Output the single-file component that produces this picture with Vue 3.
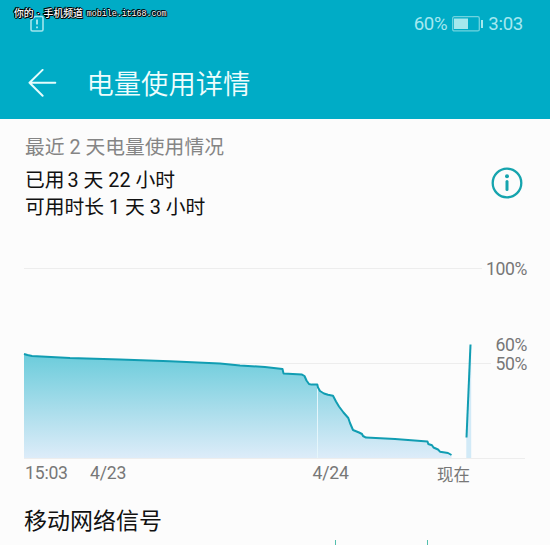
<script setup>
const levels = '24,354 27.5,355 32,356 70,358 120,359.5 170,361.3 220,363.4 240,365.4 265,367 282.5,369 283.5,373.4 302,374.6 304.5,376 306.5,380.5 309,384 311.5,384.6 317.3,384.6 318,387.5 320,391 324,393.5 328,394.8 333,395.7 336,401.5 339,406.5 343.5,412.5 348.3,418 350,423 353,430 359,432.5 362,434 363,436 366,437.6 395,439 427.5,441.5 428.3,444 432,445.3 433.5,447.5 438,449.5 440,451.7 448,453 451.5,455'
const area = `24,458 ${levels} 451.5,458`
const scale = [
  { y: 275, text: '100%' },
  { y: 351, text: '60%' },
  { y: 370, text: '50%' }
]
const dates = [
  { x: 25, text: '15:03' },
  { x: 90, text: '4/23' },
  { x: 312.5, text: '4/24' }
]
</script>

<template>
  <main class="screen">
    <header>
      <div class="status">
        <svg class="sim" width="14" height="18" viewBox="0 0 14 18">
          <path d="M5 1.5H11.5Q13 1.5 13 3V14.5Q13 16 11.5 16H2.5Q1 16 1 14.5V5.5Z" />
          <path class="mark" d="M7 4.5V9.5M7 11.5V13.3" />
        </svg>
        <span class="percent">60%</span>
        <svg class="battery" width="31" height="16" viewBox="0 0 31 16">
          <rect x=".7" y=".7" width="26.6" height="14.2" rx="1.5" />
          <path class="fill" d="M2 2.5H16V13H2ZM29 4H31V12H29Z" />
        </svg>
        <span class="clock">3:03</span>
      </div>
      <div class="bar">
        <svg width="29" height="29" viewBox="0 0 29 29">
          <path d="M27.3 13.7H1.5M14.6 .9L1.5 13.7L14.6 26.8" />
        </svg>
        <h1>电量使用详情</h1>
      </div>
      <div class="watermark"><span>你的<i>·</i>手机频道</span><b>mobile.it168.com</b></div>
    </header>

    <section class="summary">
      <div>
        <p class="caption">最近 2 天电量使用情况</p>
        <p class="used">已用<span class="num">3</span> 天 22 小时</p>
        <p class="left">可用时长 1 天 3 小时</p>
      </div>
      <svg class="info" width="32" height="32" viewBox="0 0 32 32">
        <circle cx="16" cy="16" r="14.3" />
        <path d="M16 14.5V22.5" />
        <circle class="dot" cx="16" cy="9.2" r="2" />
      </svg>
    </section>

    <svg class="chart" width="550" height="263" viewBox="0 230 550 263">
      <defs>
        <linearGradient id="charge" gradientUnits="userSpaceOnUse" x1="0" y1="354" x2="0" y2="458">
          <stop offset="0" stop-color="#6bccdb" />
          <stop offset=".5" stop-color="#a5dcea" />
          <stop offset="1" stop-color="#ddecf9" />
        </linearGradient>
      </defs>
      <path class="grid" d="M24 268.5H482M24 363.5H491M24 458.5H525" />
      <polygon :points="area" fill="url(#charge)" />
      <path class="recharge" d="M466.3 458V437L470 345H471.2V458Z" />
      <path class="gap" d="M317.5 388V458" />
      <polyline class="line" :points="levels" />
      <path class="line" d="M466.5 437.5L470.5 344.5" />
      <text v-for="s in scale" :key="s.text" x="527" :y="s.y" text-anchor="end">{{ s.text }}</text>
      <text v-for="d in dates" :key="d.text" class="date" :x="d.x" y="479">{{ d.text }}</text>
      <text class="now" x="437" y="480.5">现在</text>
    </svg>

    <section class="signal">
      <h2>移动网络信号</h2>
      <svg width="550" height="6" viewBox="0 0 550 6">
        <path d="M335.5 0V6M427.5 0V6" />
      </svg>
    </section>
  </main>
</template>

<style>
body { margin: 0; overflow: hidden; }
</style>

<style scoped>
.screen {
  width: 550px;
  height: 545px;
  overflow: hidden;
  background: #fcfcfc;
  font-family: Roboto, "Noto Sans CJK SC", sans-serif;
  color: #111;
}
svg { display: block; flex: none; }
h1, h2, p { margin: 0; font-weight: 400; white-space: nowrap; }
header {
  position: relative;
  height: 119px;
  background: #00acc6;
}
.status {
  display: flex;
  align-items: center;
  height: 47px;
  padding-left: 30px;
  color: #a5e8f0;
  font-size: 18.6px;
  letter-spacing: -.3px;
}
.sim { fill: none; stroke: #a0e5ed; stroke-width: 1.6; }
.sim .mark { stroke-width: 2; }
.percent { margin-left: auto; }
.battery { margin: 0 5px; fill: none; stroke: #70d3df; stroke-width: 1.3; }
.battery .fill { fill: #a5e8ed; stroke: none; }
.clock { margin-right: 27px; }
.bar { display: flex; align-items: center; height: 72px; padding-left: 28px; gap: 29.5px; }
.bar svg { fill: none; stroke: #e4fcfc; stroke-width: 2; stroke-linecap: round; stroke-linejoin: round; }
h1 { padding-top: 3px; color: #effdfd; font-size: 27.3px; line-height: 40px; font-weight: 350; }
.watermark {
  position: absolute;
  left: 14px;
  top: 6px;
  display: flex;
  align-items: center;
  gap: 4px;
  height: 14px;
  color: #fff;
  white-space: nowrap;
  font-size: 9.8px;
  font-weight: 500;
  text-shadow: 1px 0 #000, -1px 0 #000, 0 1px #000, 0 -1px #000, 1px 1px #000, -1px -1px #000;
}
.watermark i { display: inline-block; width: 10px; text-align: center; font-style: normal; font-weight: 700; }
.watermark b { padding-top: 1px; font: 8.3px "Liberation Mono", monospace; }
.summary {
  display: flex;
  justify-content: space-between;
  height: 111px;
  padding: 0 27px 0 25px;
  box-sizing: border-box;
  font-size: 19.8px;
  line-height: 27px;
}
.caption { margin-top: 15px; color: #858585; }
.used { margin-top: 6px; }
.num { margin-left: 3px; }
.info { margin-top: 48px; fill: none; stroke: #16a4ae; stroke-width: 2.3; }
.info path { stroke-width: 3; stroke-linecap: round; }
.info .dot { fill: #16a4ae; stroke: none; }
.chart text { fill: #777; font-size: 17.6px; letter-spacing: -.4px; }
.chart .date { letter-spacing: -.2px; }
.chart .now { font-size: 16.5px; letter-spacing: 0; }
.grid { stroke: #ededed; stroke-width: 1; fill: none; }
.gap { stroke: #e5f6fb; stroke-width: 1; }
.recharge { fill: #d2eaf7; }
.line { fill: none; stroke: #119db2; stroke-width: 2; stroke-linejoin: round; }
h2 { padding: 12px 0 0 24px; font-size: 23px; line-height: 34px; }
.signal svg { margin-top: 1px; }
.signal path { stroke: #52bfad; stroke-width: 1; }
</style>
